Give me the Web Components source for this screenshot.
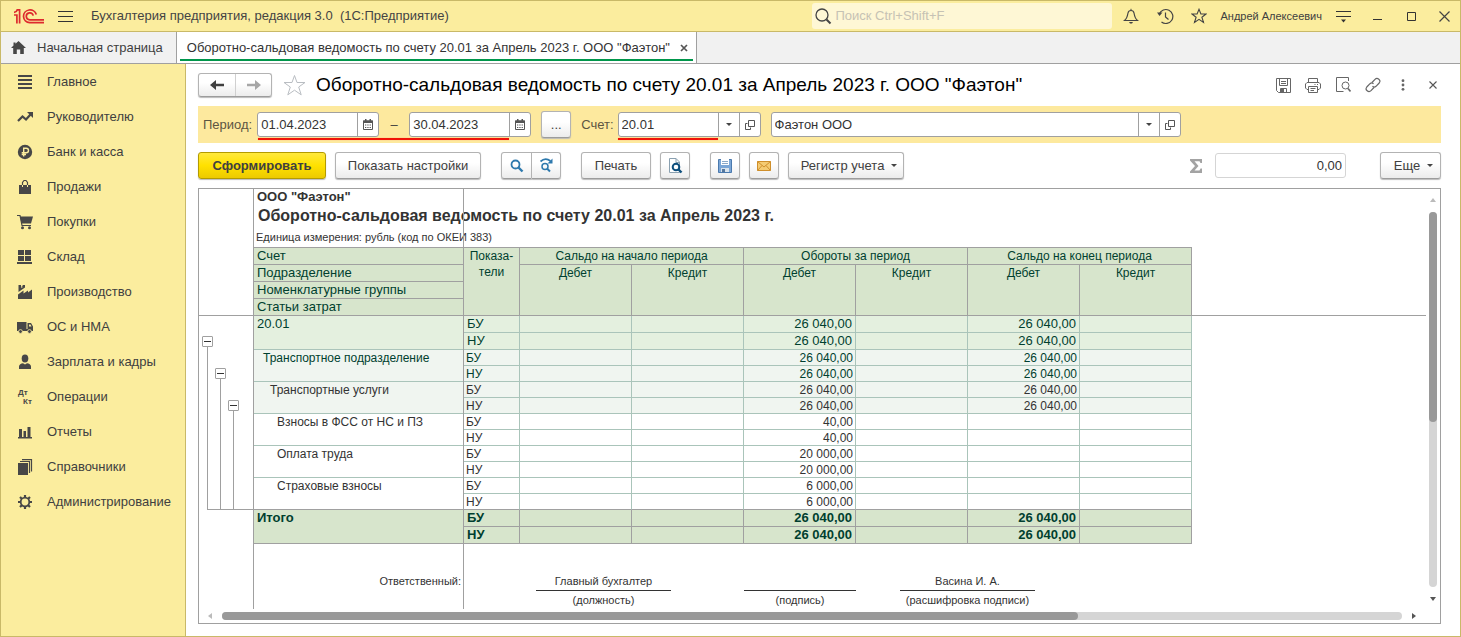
<!DOCTYPE html>
<html lang="ru">
<head>
<meta charset="utf-8">
<title>Бухгалтерия предприятия, редакция 3.0</title>
<style>
html, body { margin: 0; height: 100%; }
body { font: 13px/16px "Liberation Sans", Arial, sans-serif; color: #404040; background: #fff; }
</style>
</head>
<body>
<app-window></app-window>
<script>
const ICONS = {
  logo: [30, 15, '<g fill="none" stroke="#dd2a2e" stroke-width="1.7"><path d="M0 3.400C1.800 3.200 2.800 2.300 3.200 .9H5.600V14.500"/><path d="M0 6H2.900V14.500"/><path d="M22.300 5.600A6.500 6.400 0 1 0 15.700 13.700H30"/><path d="M19.200 6.600A3.500 3.500 0 1 0 15.800 10.800H30"/></g>'],
  burger: [15, 11, '<path d="M0 .5H15M0 5.500H15M0 10.500H15" stroke="#333" fill="none"/>'],
  search: [17, 17, '<g fill="none" stroke="#444"><circle cx="7" cy="7" r="6" stroke-width="1.3"/><path d="M11.500 11.500L15.500 15.500" stroke-width="2"/></g>'],
  bell: [16, 16, '<path d="M1.500 12.500C4 10.500 4.500 8 5 5C5.300 3.200 6.500 2.500 8 2.500S10.700 3.200 11 5C11.500 8 12 10.500 14.500 12.500Z" fill="none" stroke="#444" stroke-width="1.2"/><path d="M6 14H10L9 15.500H7Z" fill="#444"/><path d="M8 .8V2.500" stroke="#444"/>'],
  history: [17, 17, '<g fill="none" stroke="#444" stroke-width="1.2"><path d="M2.300 6A7 7 0 1 1 4.500 14"/><path d="M8.500 4.500V9L11.500 11.500"/></g><path d="M0 4.500H5.500L2.500 8Z" fill="#444"/>'],
  star: [16, 16, '<path d="M8 1.300L9.900 6H15L10.900 9.200L12.500 14.500L8 11.400L3.500 14.500L5.100 9.200L1 6H6.100Z" fill="none" stroke="#444" stroke-width="1.100"/>'],
  bigstar: [23, 22, '<path d="M11.500 1.500L14 8.500H22L15.700 13L18.200 20.800L11.500 16.200L4.800 20.800L7.300 13L1 8.500H9Z" fill="#fff" stroke="#b9bdc2" stroke-width="1"/>'],
  options: [15, 13, '<path d="M0 1.500H15M0 6.500H15" stroke="#333"/><path d="M5 9.500H10L7.500 12.500Z" fill="#333"/>'],
  minimize: [9, 10, '<path d="M0 8.500H9" stroke="#333"/>'],
  maximize: [9, 9, '<path d="M.5 .5H8.500V8.500H.5Z" fill="none" stroke="#333"/>'],
  close: [11, 11, '<path d="M.5 .5L10.500 10.500M10.500 .5L.5 10.500" stroke="#444" stroke-width="1.200"/>'],
  closeSmall: [8, 8, '<path d="M.5 .5L7.500 7.500M7.500 .5L.5 7.500" stroke="#555" stroke-width="1.100"/>'],
  closeTab: [8, 8, '<path d="M1 1L7 7M7 1L1 7" stroke="#555" stroke-width="1.700"/>'],
  home: [15, 13, '<path d="M7.500 0L15 7H12.800V13H9.200V8.500H5.800V13H2.200V7H0L2.500 4.600V1.500H4.500V2.800Z" fill="#474747"/>'],
  menu: [16, 16, '<path d="M1 2H15M1 6H15M1 10H15M1 14H15" stroke="#474747" stroke-width="2"/>'],
  trend: [16, 16, '<path d="M1 12L5.500 7.500L9 10.500L13.500 5.500" fill="none" stroke="#474747" stroke-width="2.200"/><path d="M10 3H16V9Z" fill="#474747"/>'],
  ruble: [16, 16, '<circle cx="8" cy="8" r="7.200" fill="#474747"/><path d="M6.700 12.500V4.300H9.300A2.200 2.200 0 0 1 9.300 8.700H4.700M4.700 10.500H9" fill="none" stroke="#fbed9e" stroke-width="1.400"/>'],
  bag: [16, 16, '<path d="M2 6H5V8H6V6H10V8H11V6H14V15H2Z" fill="#474747"/><path d="M5.500 6V3.500L7 1.500H9L10.500 3.500V6" fill="none" stroke="#474747" stroke-width="1.200"/>'],
  cart: [16, 16, '<path d="M3 2.500H16L14 9.500H4.500Z" fill="#474747"/><path d="M0 1.500H3L5 11.500H14" fill="none" stroke="#474747" stroke-width="1.200"/><circle cx="5.500" cy="13.700" r="1.500" fill="#474747"/><circle cx="12.500" cy="13.700" r="1.500" fill="#474747"/>'],
  stock: [16, 16, '<path d="M1 1H7V6H1ZM8 1H14V6H8ZM1 7H7V12H1ZM8 7H14V12H8ZM0 13H15V15H0Z" fill="#474747"/>'],
  factory: [16, 16, '<path d="M1 15V10.500L6.500 6.500V9.500L11 6.500V8.500L15 5.500V15Z" fill="#474747"/><path d="M1.500 8V1H4V3L6 1H8V3.500Z" fill="#474747"/><path d="M4.800 1V4" stroke="#fbed9e" stroke-width=".8"/>'],
  truck: [16, 16, '<path d="M0 3H9.500V12H0ZM10.500 4H14L16 7.500V12H10.500Z" fill="#474747"/><path d="M9 10H11V12H9Z" fill="#474747"/><path d="M12 5.500H13.500L14.500 7.500H12Z" fill="#fbed9e"/><circle cx="3.500" cy="12.500" r="1.900" fill="#474747" stroke="#fbed9e" stroke-width=".8"/><circle cx="12.500" cy="12.500" r="1.900" fill="#474747" stroke="#fbed9e" stroke-width=".8"/>'],
  person: [16, 16, '<ellipse cx="8" cy="4.500" rx="3.300" ry="4" fill="#474747"/><path d="M2 15V12.500C2 10.500 4 9.500 6 9.300L8 10.500L10 9.300C12 9.500 14 10.500 14 12.500V15Z" fill="#474747"/>'],
  ops: [16, 16, '<g font-family="Liberation Sans, Arial, sans-serif" font-weight="bold" font-size="8" fill="#474747"><text x="1" y="6">Дт</text><text x="6" y="15">Кт</text></g>'],
  bars: [16, 16, '<path d="M1 13H15V14.500H1ZM2 5H5V13H2ZM6.500 7H9V13H6.500ZM10.500 3H13.500V13H10.500Z" fill="#474747"/>'],
  books: [16, 16, '<path d="M1 4H11V16H1Z" fill="#474747"/><path d="M3 2.500H12.500V14M5 .7H14.500V12.500" fill="none" stroke="#474747" stroke-width="1.200"/>'],
  gear: [16, 16, '<circle cx="8" cy="8" r="4.300" fill="none" stroke="#474747" stroke-width="1.800"/><g stroke="#474747" stroke-width="2.200"><path d="M8 1V4M8 12V15M1 8H4M12 8H15M3 3L5 5M11 11L13 13M13 3L11 5M5 11L3 13"/></g>'],
  back: [14, 12, '<path d="M0 6L6 1V4.700H14V7.300H6V11Z" fill="#404040"/>'],
  fwd: [14, 12, '<path d="M14 6L8 1V4.700H0V7.300H8V11Z" fill="#a6a6a6"/>'],
  disk: [15, 15, '<g fill="none" stroke="#666"><path d="M.5 .5H14.500V14.500H2.500L.5 12.500Z"/><path d="M3.500 .5V7.500H11.500V.5M5 3.500H10M5 5.500H10M4.500 14V10.500H10.500V14"/></g><path d="M5 11H8V14H5Z" fill="#666"/>'],
  printer: [16, 15, '<g fill="none" stroke="#666"><path d="M3.500 4.500V.5H12.500V4.500M3.500 11.500H2L.5 10V6L2 4.500H14L15.500 6V10L14 11.500H12.500"/><path d="M3.500 8.500H12.500V14.500H3.500ZM5.500 10.500H10.500M5.500 12.500H9M9.500 6.500H10.500M12 6.500H13"/></g>'],
  preview: [15, 16, '<g fill="none" stroke="#666"><path d="M7.500 14.500H.5V.5H12.500V4"/><circle cx="9.500" cy="8.500" r="3.500"/><path d="M12 11.500L14.500 14.500" stroke-width="1.600"/></g>'],
  link: [16, 16, '<g fill="none" stroke="#666" stroke-width="1.200"><path d="M7 5.500L10 2.300C12.300 0 16.500 3 14.200 6L11 9.300C9.800 10.300 8.500 10.200 7.500 9.300"/><path d="M9 10.500L6 13.700C3.700 16 -.5 13 1.800 10L5 6.700C6.200 5.700 7.500 5.800 8.500 6.700"/></g>'],
  dots: [4, 12, '<g fill="#666"><circle cx="2" cy="1.700" r="1.400"/><circle cx="2" cy="6" r="1.400"/><circle cx="2" cy="10.300" r="1.400"/></g>'],
  calendar: [10, 11, '<path d="M.5 2H9.500V10.500H.5Z" fill="none" stroke="#555"/><path d="M0 1.500H10V4H0ZM2 0H3.500V2H2ZM6.500 0H8V2H6.500Z" fill="#555"/><path d="M2 6H8M2 8.500H8" stroke="#555" stroke-dasharray="1.300 1"/>'],
  caret: [6, 3, '<path d="M0 0H6L3 3Z" fill="#444"/>'],
  popout: [10, 10, '<g fill="none" stroke="#555"><path d="M3.500 .5H9.500V6.500H3.500Z"/><path d="M2.500 3.500H.5V9.500H5.500V7.500"/></g>'],
  find: [14, 14, '<g fill="none" stroke="#2e79ad"><circle cx="5.500" cy="5.500" r="4" stroke-width="1.800"/><path d="M8.500 8.500L12.500 12.500" stroke-width="2.400"/></g>'],
  findNext: [15, 15, '<g fill="none" stroke="#2e79ad"><circle cx="6" cy="8.500" r="3" stroke-width="1.500"/><path d="M8 10.500L11 13.500" stroke-width="2"/><path d="M1.500 3.500C4.500 .8 8.500 .8 11.500 3" stroke-width="1.700"/></g><path d="M13.500 .5V5.500H8.500Z" fill="#2e79ad"/>'],
  docFind: [16, 16, '<path d="M2.500 .5H9L12.500 4V14.500H2.500Z" fill="#fff" stroke="#8aa0b0"/><path d="M9 .5V4.500H12.500" fill="none" stroke="#8aa0b0"/><g fill="none" stroke="#0e4f7d"><circle cx="9" cy="9" r="3.300" stroke-width="2"/><path d="M11.500 11.500L14.500 14.500" stroke-width="2.400"/></g>'],
  save: [16, 16, '<path d="M1.500 1.500H14.500V14.500H1.500Z" fill="#7ba6d6" stroke="#4a79ad"/><path d="M4 1H12V7H4Z" fill="#fff"/><path d="M5 3.500H11M5 5.500H11" stroke="#8aa8c8"/><path d="M4 10H12V14H4Z" fill="#d9e3ec"/><path d="M5 11H8V14H5Z" fill="#55779d"/>'],
  mail: [16, 12, '<path d="M1.500 1.500H14.500V10.500H1.500Z" fill="#f5cb72" stroke="#cf8f2b"/><path d="M1.500 1.500L8 7L14.500 1.500M1.500 10.500L6 5.500M14.500 10.500L10 5.500" fill="none" stroke="#cf8f2b"/>'],
  sigma: [12, 14, '<path d="M0 0H12V4H10.500L9.500 2.200H4.500L8.500 7L4.500 11.500H9.500L10.500 9.500H12V14H0V12.500L5 7L0 1.500Z" fill="#a3a3a3"/>'],
  minus: [9, 9, '<path d="M1 4.500H8" stroke="#333"/>'],
  up: [6, 4, '<path d="M0 4H6L3 0Z" fill="#bbb"/>'],
  down: [6, 4, '<path d="M0 0H6L3 4Z" fill="#555"/>'],
  left: [4, 6, '<path d="M4 0V6L0 3Z" fill="#bbb"/>'],
  right: [4, 6, '<path d="M0 0V6L4 3Z" fill="#555"/>']
};

function define(tag, css, html) {
  const tpl = document.createElement('template');
  const build = el => {
    tpl.innerHTML = `<style>*{box-sizing:border-box}button,input{font:inherit;color:inherit}button{padding:0;margin:0;border:0;background:none;display:inline-flex;align-items:center;justify-content:center}${css}</style>` + (typeof html === 'function' ? html(el) : html);
    return tpl.content.cloneNode(true);
  };
  customElements.define(tag, class extends HTMLElement {
    connectedCallback() {
      if (this.shadowRoot) return;
      this.attachShadow({ mode: 'open' }).append(build(this));
    }
  });
}

define('ui-icon', ':host{display:inline-block;flex:none;line-height:0}svg{display:block}', el => {
  const [w, h, body] = ICONS[el.getAttribute('name')];
  return `<svg width="${w}" height="${h}" viewBox="0 0 ${w} ${h}" aria-hidden="true">${body}</svg>`;
});

/* Raised toolbar button */
define('tool-button', `
:host{display:block;flex:none;width:var(--w,auto)}
button{width:100%;height:27px;gap:7px;border:1px solid #b3b3b3;border-bottom-color:#9c9c9c;border-radius:3px;background:linear-gradient(#fff 40%,#ececec);box-shadow:0 1px 1px #bbb;white-space:nowrap}
:host([primary]) button{font-weight:bold;background:linear-gradient(#ffe93d,#ffe100 50%,#ecca00);border-color:#b39b00}
:host([first]) button{border-radius:3px 0 0 3px}
:host([last]) button{border-radius:0 3px 3px 0;border-left:0}
:host([drop]) button{padding-left:6px}`,
  el => `<button type="button"${el.title ? ` aria-label="${el.title}"` : ''}><slot></slot></button>`);

/* Labelled text box with trailing buttons */
define('input-field', `
:host{display:flex;align-items:center;flex:none}
label{color:#5c5542;margin-right:var(--label-gap,0)}
.box{display:flex;width:var(--w,122px);height:25px;border:1px solid #a0a0a0;border-radius:3px;background:#fff;overflow:hidden}
input{flex:1;min-width:0;border:0;outline:0;padding:0 3px;background:none;color:#333}
button{width:21px;border-left:1px solid #a0a0a0}
:host([total]) .box{border-color:#d5d5d5}
:host([total]) input{text-align:right}`,
  el => `<label for="f"><slot></slot></label><span class="box"><input id="f" type="text" value="${el.getAttribute('value')}"${el.hasAttribute('caption') ? ` aria-label="${el.getAttribute('caption')}"` : ''}>${(el.getAttribute('actions') || '').split(' ').filter(Boolean).map(a => `<button type="button" aria-label="${a}"><ui-icon name="${a}"></ui-icon></button>`).join('')}</span>`);

define('title-bar', `
:host{display:flex;align-items:center;height:31px;background:#fbed9e;border-bottom:1px solid #c9b968;padding-left:13px}
.name{margin:0 18px;white-space:pre;color:#444}
.search{margin-left:auto;display:flex;align-items:center;gap:3px;width:300px;height:26px;padding-left:3px;background:#fef7d5;border-radius:3px}
.search input{flex:1;min-width:0;border:0;outline:0;background:none;padding:0}
.search input::placeholder{color:#c6c2b4;opacity:1}
.ic{width:34px;height:30px;flex:none}
.ic:last-child{width:32px}
.bell{margin-left:2px}
.user{font-size:11px;margin:0 4px;white-space:nowrap}
.burger{margin-left:14px}`,
  `<ui-icon name="logo"></ui-icon><button type="button" class="burger" aria-label="Меню"><ui-icon name="burger"></ui-icon></button>
  <span class="name">Бухгалтерия предприятия, редакция 3.0  (1С:Предприятие)</span>
  <label class="search"><ui-icon name="search"></ui-icon><input type="search" placeholder="Поиск Ctrl+Shift+F" aria-label="Поиск"></label>
  <button type="button" class="ic bell" aria-label="Уведомления"><ui-icon name="bell"></ui-icon></button>
  <button type="button" class="ic" aria-label="История"><ui-icon name="history"></ui-icon></button>
  <button type="button" class="ic" aria-label="Избранное"><ui-icon name="star"></ui-icon></button>
  <span class="user">Андрей Алексеевич</span>
  <button type="button" class="ic" aria-label="Настройки"><ui-icon name="options"></ui-icon></button>
  <button type="button" class="ic" aria-label="Свернуть"><ui-icon name="minimize"></ui-icon></button>
  <button type="button" class="ic" aria-label="Развернуть"><ui-icon name="maximize"></ui-icon></button>
  <button type="button" class="ic" aria-label="Закрыть"><ui-icon name="close"></ui-icon></button>`);

define('tab-strip', `
:host{display:flex;height:32px;background:#f1f1f1;border-bottom:1px solid #a0a0a0}
button{white-space:nowrap}
.home{padding:0 13px 0 10px;gap:11px}
.tab{display:flex;align-items:center;gap:10px;padding:0 8px 0 10px;background:linear-gradient(#00964b,#00964b) 50% 27px/calc(100% - 6px) 2px no-repeat #fff;border:solid #a0a0a0;border-width:0 1px;color:#333}`,
  `<button type="button" class="home"><ui-icon name="home"></ui-icon>Начальная страница</button>
  <div class="tab"><button type="button">Оборотно-сальдовая ведомость по счету 20.01 за Апрель 2023 г. ООО "Фаэтон"</button><button type="button" aria-label="Закрыть вкладку"><ui-icon name="closeTab"></ui-icon></button></div>`);

define('nav-item', `
:host{display:block}
a{display:flex;align-items:center;gap:14px;height:35px;padding-left:16px;color:#404040;text-decoration:none;white-space:nowrap}`,
  el => `<a href="#"><ui-icon name="${el.getAttribute('icon')}"></ui-icon><span><slot></slot></span></a>`);

define('side-nav', `
:host{display:block;flex:none;width:185px;box-sizing:border-box;background:#fbed9e;border-right:1px solid #c9b968}`,
  `<nav>${[['menu', 'Главное'], ['trend', 'Руководителю'], ['ruble', 'Банк и касса'], ['bag', 'Продажи'], ['cart', 'Покупки'], ['stock', 'Склад'], ['factory', 'Производство'], ['truck', 'ОС и НМА'], ['person', 'Зарплата и кадры'], ['ops', 'Операции'], ['bars', 'Отчеты'], ['books', 'Справочники'], ['gear', 'Администрирование']].map(([i, t]) => `<nav-item icon="${i}">${t}</nav-item>`).join('')}</nav>`);

define('page-header', `
:host{display:flex;align-items:center;height:42px}
.hist{display:flex;border:1px solid #b3b3b3;border-bottom-color:#9c9c9c;border-radius:3px;background:linear-gradient(#fff 40%,#ececec);box-shadow:0 1px 1px #bbb}
.hist button{width:36px;height:22px}
.hist button+button{border-left:1px solid #d0d0d0}
.star{margin:0 10px 0 11px}
h1{flex:1;min-width:0;margin:0;font-size:19px;line-height:24px;font-weight:normal;color:#000;white-space:nowrap}
.ic{width:30px;height:24px}
.end{margin-right:-7px;display:flex}`,
  `<div class="hist"><button type="button" aria-label="Назад"><ui-icon name="back"></ui-icon></button><button type="button" aria-label="Вперед"><ui-icon name="fwd"></ui-icon></button></div>
  <button type="button" class="star" aria-label="В избранное"><ui-icon name="bigstar"></ui-icon></button>
  <h1>Оборотно-сальдовая ведомость по счету 20.01 за Апрель 2023 г. ООО "Фаэтон"</h1>
  <div class="end">${[['disk', 'Сохранить'], ['printer', 'Печать'], ['preview', 'Просмотр'], ['link', 'Ссылка'], ['dots', 'Ещё действия'], ['closeSmall', 'Закрыть']].map(([i, t]) => `<button type="button" class="ic" aria-label="${t}"><ui-icon name="${i}"></ui-icon></button>`).join('')}</div>`);

define('filter-bar', `
:host{display:flex;align-items:center;gap:10px;height:37px;padding-left:5px;background:#fde99e}
.mark{position:relative;display:flex;align-items:center}
.mark::after{content:"";position:absolute;left:var(--from);right:var(--to);top:26px;height:2px;background:#f01408;box-shadow:0 0 1px #ff7a5a}
.dash{width:30px;text-align:center}
.period{--from:55px;--to:22px;--label-gap:5px}
.account{--from:37px;--to:43px;--label-gap:4px}
.plain{--label-gap:0px}`,
  `<div class="mark period"><input-field value="01.04.2023" actions="calendar">Период:</input-field><span class="dash">–</span><input-field class="plain" value="30.04.2023" actions="calendar" caption="Конец периода"></input-field></div>
  <tool-button style="--w:30px" title="Выбрать период">...</tool-button>
  <div class="mark account"><input-field style="--w:143px" value="20.01" actions="caret popout">Счет:</input-field></div>
  <input-field style="--w:410px" value="Фаэтон ООО" actions="caret popout" caption="Организация"></input-field>`);

define('command-bar', `
:host{display:flex;align-items:center;gap:9px;height:45px}
.group{display:flex}
.wide{margin-left:11px}
.sum{margin:0 4px 0 auto}
.more{margin-left:25px}`,
  `<tool-button primary style="--w:128px">Сформировать</tool-button>
  <tool-button style="--w:146px">Показать настройки</tool-button>
  <div class="group wide"><tool-button first style="--w:31px" title="Найти"><ui-icon name="find"></ui-icon></tool-button><tool-button last style="--w:29px" title="Найти далее"><ui-icon name="findNext"></ui-icon></tool-button></div>
  <tool-button class="wide" style="--w:70px">Печать</tool-button>
  <tool-button style="--w:30px" title="Предварительный просмотр"><ui-icon name="docFind"></ui-icon></tool-button>
  <tool-button class="wide" style="--w:30px" title="Сохранить"><ui-icon name="save"></ui-icon></tool-button>
  <tool-button style="--w:30px" title="Отправить"><ui-icon name="mail"></ui-icon></tool-button>
  <tool-button drop style="--w:116px">Регистр учета<ui-icon name="caret"></ui-icon></tool-button>
  <ui-icon class="sum" name="sigma"></ui-icon>
  <input-field total style="--w:131px" value="0,00" caption="Сумма"></input-field>
  <tool-button drop class="more" style="--w:61px">Еще<ui-icon name="caret"></ui-icon></tool-button>`);

/* [level, caption, turnover debit, closing debit] */
const ROWS = [
  ['l0', '20.01', '26 040,00', '26 040,00'],
  ['l1', 'Транспортное подразделение', '26 040,00', '26 040,00'],
  ['l2', 'Транспортные услуги', '26 040,00', '26 040,00'],
  ['l3', 'Взносы в ФСС от НС и ПЗ', '40,00', ''],
  ['l3', 'Оплата труда', '20 000,00', ''],
  ['l3', 'Страховые взносы', '6 000,00', ''],
  ['total', 'Итого', '26 040,00', '26 040,00']
];
const cells = (kind, a, b) => `<td class="k">${kind}</td><td></td><td></td><td>${a}</td><td></td><td>${b}</td><td></td>`;

define('balance-table', `
:host{display:block}
table{table-layout:fixed;width:939px;border-collapse:separate;border-spacing:0;border:solid #a0a0a0;border-width:1px 0 0 1px;font-size:12px;line-height:14px}
th,td{padding:1px 2px 0;height:16px;border:solid #aac4ba;border-width:0 1px 1px 0;vertical-align:top;text-align:right;font-weight:normal;white-space:nowrap;overflow:hidden}
thead th{height:17px;padding-top:0;background:#d7e5cc;color:#003f2f;border-color:#a0a0a0;text-align:center;line-height:16px}
thead th.n,tbody th{text-align:left;padding-left:3px}
thead th.n{font-size:13px}
tbody th{border-right-color:#a0a0a0}
td.k{text-align:left}
.l0{background:#e4f0df;color:#003f2f;font-size:13px}.l1{background:#f0f5f0;color:#003f2f}.l2{background:#f0f5f0}
.l0 th,.l0 td,.total th,.total td{height:17px;padding-top:0;padding-right:3px;line-height:16px}
.l0 td.k,.total td.k{padding-left:3px}
.l1 th{padding-left:9px}.l2 th{padding-left:16px}.l3 th{padding-left:23px}
.last td,.edge th{border-bottom-color:#a0a0a0}
.total{background:#d7e5cc;color:#003f2f;font-size:13px}
.total th,.total td{font-weight:bold;border-color:#a0a0a0}`,
  `<table><colgroup><col style="width:210px"><col style="width:56px"><col span="6" style="width:112px"></colgroup>
  <thead><tr><th class="n">Счет</th><th rowspan="4">Показа-<br>тели</th><th colspan="2">Сальдо на начало периода</th><th colspan="2">Обороты за период</th><th colspan="2">Сальдо на конец периода</th></tr>
  <tr><th class="n">Подразделение</th>${'<th rowspan="3">Дебет</th><th rowspan="3">Кредит</th>'.repeat(3)}</tr>
  <tr><th class="n">Номенклатурные группы</th></tr><tr><th class="n">Статьи затрат</th></tr></thead>
  <tbody>${ROWS.map(([c, t, a, b], i) => `<tr class="${c}${i === 5 ? ' edge' : ''}"><th scope="row" rowspan="2">${t}</th>${cells('БУ', a, b)}</tr><tr class="${c}${i === 5 ? ' last' : ''}">${cells('НУ', a, b)}</tr>`).join('')}</tbody></table>`);

define('tree-branch', `
:host{display:flex;flex-direction:column;align-items:center;width:11px}
button{width:11px;height:11px;border:1px solid #a0a0a0;border-radius:1px;background:#fff}
i{flex:1;width:1px;background:#a0a0a0}`,
  `<button type="button" aria-label="Свернуть группу"><ui-icon name="minus"></ui-icon></button><i></i>`);

define('sign-line', `
:host{display:block;flex:none;width:var(--w);text-align:center;white-space:nowrap}
div{height:18px;border-bottom:1px solid #333}
small{display:block;font-size:11px;padding-top:1px}`,
  el => `<div><slot></slot></div><small>${el.getAttribute('role-name')}</small>`);

define('report-sheet', `
:host{display:grid;grid-template:minmax(0,1fr) 14px/minmax(0,1fr) 14px;border:1px solid #a0a0a0;background:#fff;color:#333}
.view{position:relative;display:grid;grid-template-columns:54px 1fr;overflow:hidden;align-items:start}
.view::before,.view::after{content:"";position:absolute;pointer-events:none}
.view::before{left:54px;width:209px;top:0;bottom:0;border:solid #a0a0a0;border-width:0 1px}
.view::after{left:0;right:0;top:126px;height:1px;background:#a0a0a0}
.tree{display:flex;gap:2px;height:321px;padding:147px 0 0 3px;position:relative}
.tree::after{content:"";position:absolute;left:8px;right:0;bottom:0;height:1px;background:#a0a0a0}
.tree tree-branch:nth-child(2){margin-top:32px}
.tree tree-branch:nth-child(3){margin-top:64px}
.org,.unit,h2{margin:0;padding-left:4px;white-space:nowrap}
.org{font-weight:bold;height:17px}
h2{font-size:16px;line-height:20px;padding-left:5px}
.unit{font-size:11px;height:21px;padding:3px 0 0 3px}
.sign{display:flex;font-size:11px;padding-top:29px}
.resp{width:210px;padding-right:2px;text-align:right;margin-right:73px}
.v,.h{display:flex;align-items:center}
.v{flex-direction:column;padding:9px 0 8px;gap:10px}
.h{padding:0 10px 0 9px;gap:10px}
.track{flex:1;background:#d5d5d5;border-radius:4px;display:flex}
.v .track{width:8px;flex-direction:column}.h .track{height:8px}
.thumb{background:#999;border-radius:4px}
.v .thumb{height:56%}.h .thumb{width:72.500%}`,
  `<div class="view"><div class="tree"><tree-branch></tree-branch><tree-branch></tree-branch><tree-branch></tree-branch></div>
  <div><p class="org">ООО "Фаэтон"</p><h2>Оборотно-сальдовая ведомость по счету 20.01 за Апрель 2023 г.</h2><p class="unit">Единица измерения: рубль (код по ОКЕИ 383)</p>
  <balance-table></balance-table>
  <div class="sign"><span class="resp">Ответственный:</span><sign-line style="--w:135px;margin-right:73px" role-name="(должность)">Главный бухгалтер</sign-line><sign-line style="--w:112px;margin-right:44px" role-name="(подпись)"></sign-line><sign-line style="--w:135px" role-name="(расшифровка подписи)">Васина И. А.</sign-line></div></div></div>
  <div class="v"><ui-icon name="up"></ui-icon><div class="track"><div class="thumb"></div></div><ui-icon name="down"></ui-icon></div>
  <div class="h"><ui-icon name="left"></ui-icon><div class="track"><div class="thumb"></div></div><ui-icon name="right"></ui-icon></div>`);

define('app-window', `
:host{display:flex;flex-direction:column;min-height:100vh;box-sizing:border-box;border:1px solid #c9b968}
.body{display:flex;flex:1}
main{flex:1;min-width:0;display:flex;flex-direction:column;padding:0 19px 12px 12px}
report-sheet{flex:1}`,
  `<title-bar></title-bar><tab-strip></tab-strip><div class="body"><side-nav></side-nav><main><page-header></page-header><filter-bar></filter-bar><command-bar></command-bar><report-sheet></report-sheet></main></div>`);
</script>
</body>
</html>
